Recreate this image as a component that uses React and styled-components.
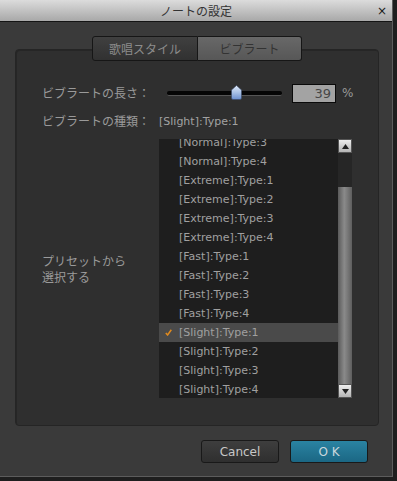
import styled, { createGlobalStyle } from "styled-components";

const GlobalStyle = createGlobalStyle`
  html, body {
    margin: 0;
    padding: 0;
    background: #1e1e1e;
  }
  body {
    font-family: "DejaVu Sans", "Noto Sans CJK JP", sans-serif;
  }
`;

const Window = styled.div`
  width: 392px;
  height: 476px;
  background: #3a3a3a;
  border-right: 1px solid #5c5c5c;
  border-bottom: 1px solid #5c5c5c;
  display: flex;
  flex-direction: column;
`;

const TitleBar = styled.div`
  height: 21px;
  border-bottom: 1px solid #141414;
  background: linear-gradient(#dcdcdc, #a8a8a8);
  display: grid;
  grid-template-columns: 1fr auto 1fr;
  align-items: center;
  font-family: "Noto Sans CJK JP", sans-serif;
  font-size: 12px;
  color: #333;
`;

const Close = styled.span`
  justify-self: end;
  margin-right: 5px;
  font-family: "DejaVu Sans", sans-serif;
  font-size: 12px;
  color: #1a1a1a;
`;

const Body = styled.div`
  display: flex;
  flex-direction: column;
  padding: 14px 13px 0 15px;
`;

const Tabs = styled.div`
  align-self: center;
  display: flex;
  position: relative;
  z-index: 1;
  margin-bottom: -12px;
`;

const Tab = styled.div`
  width: ${(p) => (p.$first ? "104px" : "103px")};
  height: 23px;
  border: 1px solid #161616;
  border-left: ${(p) => (p.$first ? "1px solid #161616" : "none")};
  border-radius: ${(p) => (p.$first ? "3px 0 0 3px" : "0 3px 3px 0")};
  display: flex;
  align-items: center;
  justify-content: center;
  font-family: "Noto Sans CJK JP", sans-serif;
  font-size: 12px;
  background: ${(p) =>
    p.$active
      ? "linear-gradient(#686868, #575757)"
      : "linear-gradient(#404040, #313131)"};
  color: ${(p) => (p.$active ? "#333333" : "#8c8c8c")};
`;

const Panel = styled.div`
  box-sizing: border-box;
  height: 377px;
  background: #2f2f2f;
  border: 1px solid #252525;
  border-radius: 4px;
  box-shadow: inset 1px 1px 0 #262626;
  padding: 33px 0 27px 26px;
  display: flex;
  flex-direction: column;
`;

const Row = styled.div`
  display: flex;
  align-items: center;
  height: ${(p) => p.$h || "auto"};
  margin-top: ${(p) => p.$mt || "0"};
`;

const Label = styled.div`
  width: 117px;
  flex-shrink: 0;
  font-family: "Noto Sans CJK JP", sans-serif;
  font-size: 12px;
  line-height: 16px;
  color: #9a9a9a;
`;

const Value = styled.div`
  font-size: 11px;
  color: #a2a2a2;
`;

const Slider = styled.div`
  position: relative;
  width: 115px;
  height: 20px;
  margin-left: 8px;
  display: flex;
  align-items: center;
`;

const Track = styled.div`
  width: 100%;
  height: 4px;
  border-radius: 2px;
  background: #050505;
  border-bottom: 1px solid #555;
`;

const Thumb = styled.svg`
  position: absolute;
  top: 2px;
  left: ${(p) => p.$pos}px;
`;

const NumberBox = styled.div`
  box-sizing: border-box;
  width: 44px;
  height: 19px;
  margin-left: 10px;
  background: #a3a3a3;
  border: 1px solid #0a0a0a;
  text-align: right;
  padding-right: 4px;
  font-size: 13px;
  line-height: 17px;
  color: #474747;
`;

const Unit = styled.span`
  margin-left: 6px;
  font-size: 12px;
  color: #9a9a9a;
`;

const List = styled.div`
  width: 193px;
  height: 259px;
  background: #1e1e1e;
  display: flex;
  overflow: hidden;
`;

const Items = styled.div`
  flex: 1;
  overflow: hidden;
`;

const ItemsInner = styled.div`
  margin-top: -6px;
`;

const Item = styled.div`
  position: relative;
  height: 19px;
  line-height: 19px;
  padding-left: 20px;
  font-size: 11px;
  color: #a0a0a0;
  background: ${(p) => (p.$selected ? "#4a4a4a" : "transparent")};
`;

const Check = styled.svg`
  position: absolute;
  left: 6px;
  top: 6px;
`;

const ScrollBar = styled.div`
  width: 14px;
  display: flex;
  flex-direction: column;
`;

const ArrowButton = styled.div`
  box-sizing: border-box;
  height: 14px;
  background: linear-gradient(#eeeeee, #b4b4b4);
  border: 1px solid #555;
  display: flex;
  align-items: center;
  justify-content: center;
`;

const Trough = styled.div`
  height: 34px;
  background: #262626;
`;

const ScrollThumb = styled.div`
  flex: 1;
  background: linear-gradient(90deg, #5a5a5a, #8a8a8a 45%, #777 70%, #5e5e5e);
`;

const Footer = styled.div`
  display: flex;
  justify-content: flex-end;
  gap: 11px;
  margin-top: 14px;
  padding-right: 11px;
`;

const Button = styled.div`
  box-sizing: border-box;
  width: 78px;
  height: 23px;
  border: 1px solid #191919;
  border-radius: 3px;
  display: flex;
  align-items: center;
  justify-content: center;
  font-size: 12px;
  color: ${(p) => (p.$primary ? "#c9d7dc" : "#c8c8c8")};
  background: ${(p) =>
    p.$primary
      ? "linear-gradient(#2a83a2, #1b6784)"
      : "linear-gradient(#3e3e3e, #2f2f2f)"};
`;

const items = [
  "[Normal]:Type:3",
  "[Normal]:Type:4",
  "[Extreme]:Type:1",
  "[Extreme]:Type:2",
  "[Extreme]:Type:3",
  "[Extreme]:Type:4",
  "[Fast]:Type:1",
  "[Fast]:Type:2",
  "[Fast]:Type:3",
  "[Fast]:Type:4",
  "[Slight]:Type:1",
  "[Slight]:Type:2",
  "[Slight]:Type:3",
  "[Slight]:Type:4",
];

const selected = "[Slight]:Type:1";

const Arrow = ({ down }) => (
  <svg width="7" height="5" viewBox="0 0 7 5">
    <path d={down ? "M0 0 L7 0 L3.5 5 Z" : "M0 5 L7 5 L3.5 0 Z"} fill="#222" />
  </svg>
);

const App = () => {
  const length = 39;
  // thumb position on the 115px track
  const thumbLeft = 64;
  return (
    <>
      <GlobalStyle />
      <Window>
        <TitleBar>
          <span />
          <span>ノートの設定</span>
          <Close>×</Close>
        </TitleBar>
        <Body>
          <Tabs>
            <Tab $first>歌唱スタイル</Tab>
            <Tab $active>ビブラート</Tab>
          </Tabs>
          <Panel>
            <Row $h="20px">
              <Label>ビブラートの長さ：</Label>
              <Slider>
                <Track />
                <Thumb $pos={thumbLeft} width="11" height="15" viewBox="0 0 11 15">
                  <defs>
                    <linearGradient id="thumb" x1="0" y1="0" x2="0" y2="1">
                      <stop offset="0" stopColor="#dfe9f8" />
                      <stop offset="0.5" stopColor="#a9c1e6" />
                      <stop offset="1" stopColor="#6b8fcf" />
                    </linearGradient>
                  </defs>
                  <path d="M5.5 0.5 L10.5 5 L10.5 13 Q10.5 14.5 9 14.5 L2 14.5 Q0.5 14.5 0.5 13 L0.5 5 Z" fill="url(#thumb)" stroke="#3b4a66" strokeWidth="0.6" />
                </Thumb>
              </Slider>
              <NumberBox>{length}</NumberBox>
              <Unit>%</Unit>
            </Row>
            <Row $h="16px" $mt="10px">
              <Label>ビブラートの種類：</Label>
              <Value>{selected}</Value>
            </Row>
            <Row $mt="10px">
              <Label>
                プリセットから
                <br />
                選択する
              </Label>
              <List>
                <Items>
                  <ItemsInner>
                    {items.map((name) => (
                      <Item key={name} $selected={name === selected}>
                        {name === selected && (
                          <Check width="7" height="7" viewBox="0 0 7 7">
                            <path d="M0.8 4 L2.6 6 L6.3 0.8" fill="none" stroke="#e08a1e" strokeWidth="1.5" />
                          </Check>
                        )}
                        {name}
                      </Item>
                    ))}
                  </ItemsInner>
                </Items>
                <ScrollBar>
                  <ArrowButton>
                    <Arrow />
                  </ArrowButton>
                  <Trough />
                  <ScrollThumb />
                  <ArrowButton>
                    <Arrow down />
                  </ArrowButton>
                </ScrollBar>
              </List>
            </Row>
          </Panel>
          <Footer>
            <Button>Cancel</Button>
            <Button $primary>O K</Button>
          </Footer>
        </Body>
      </Window>
    </>
  );
};

export default App;
